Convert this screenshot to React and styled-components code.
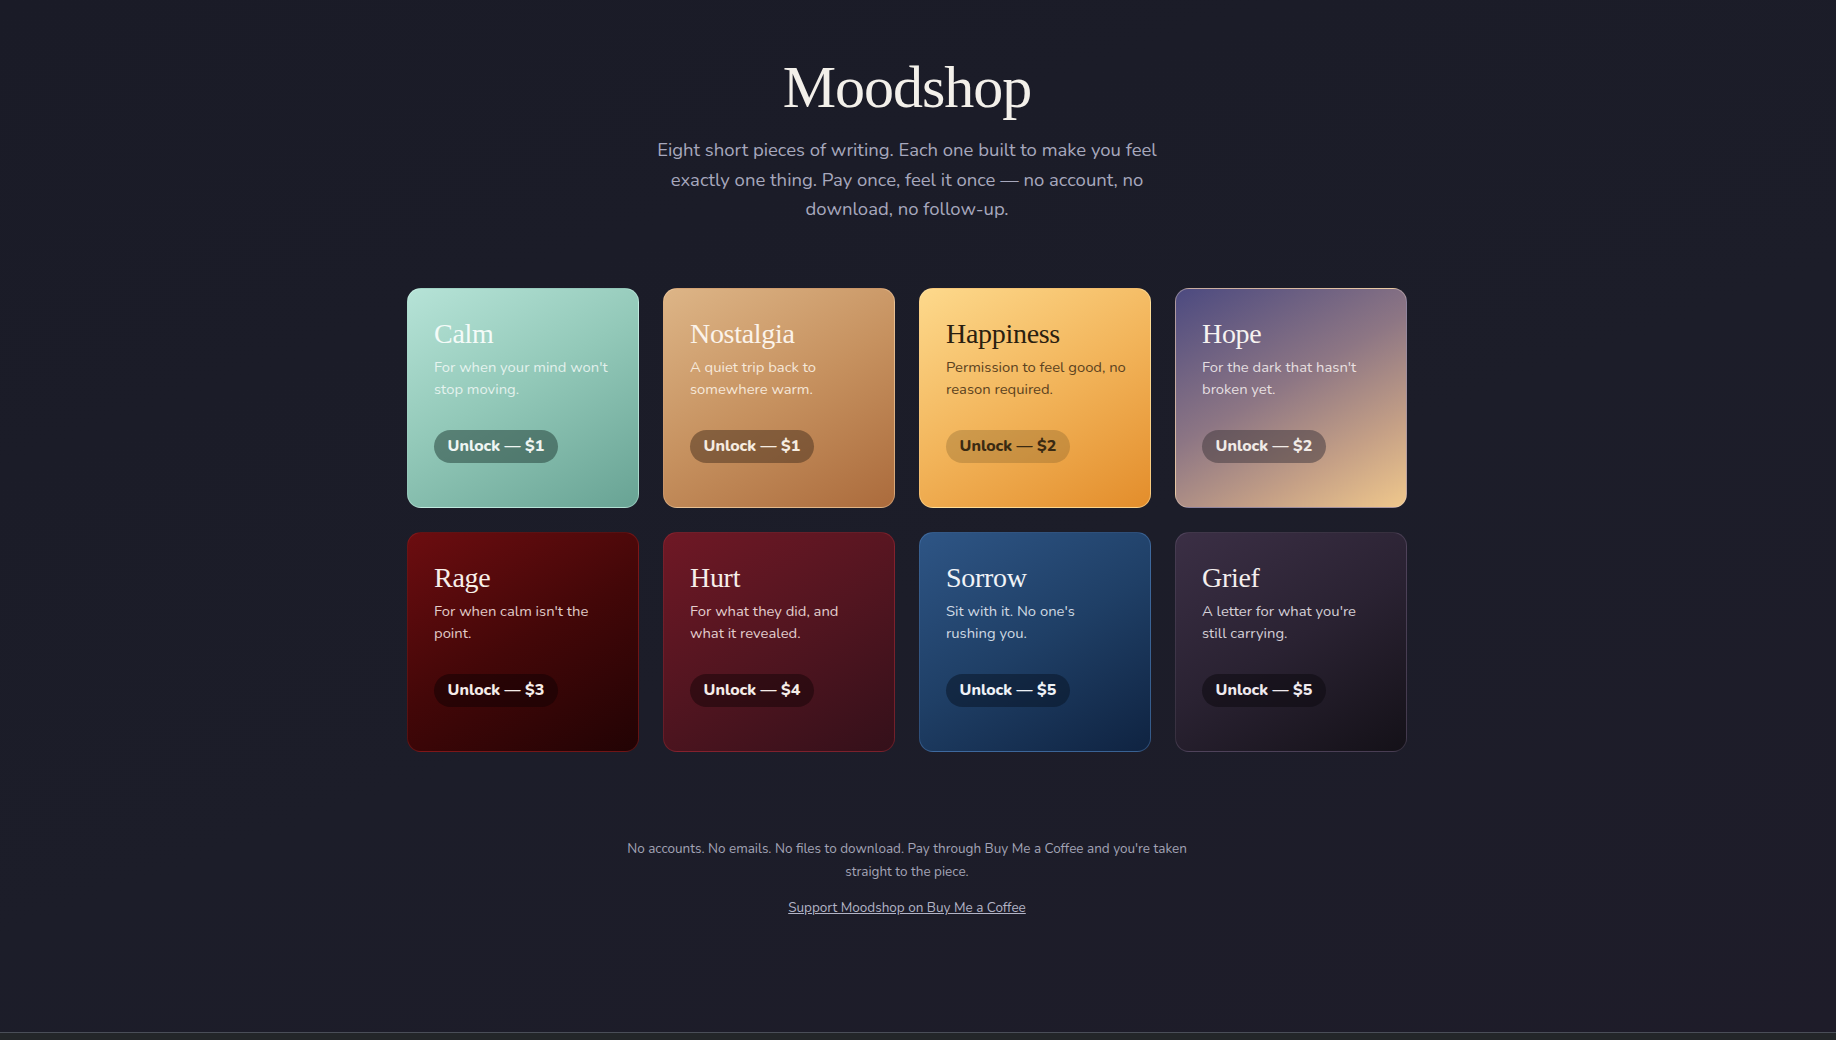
import React from "react";
import styled, { createGlobalStyle } from "styled-components";

const Global = createGlobalStyle`
  html, body { margin: 0; padding: 0; }
  body {
    background: #1b1c28;
    font-family: "Nunito", "Lato", "Open Sans", sans-serif;
    -webkit-font-smoothing: antialiased;
  }
`;

const Page = styled.div`
  min-height: 100vh;
  display: flex;
  flex-direction: column;
  background: linear-gradient(160deg, #1a1b27 0%, #1c1d29 55%, #1e1c29 100%);
`;

const Main = styled.main`
  flex: 1;
  display: flex;
  flex-direction: column;
  align-items: center;
  padding: 51px 22px 0 0;
`;

const Title = styled.h1`
  margin: 0;
  font-family: "Liberation Serif", "Times New Roman", serif;
  font-weight: 400;
  font-size: 60px;
  letter-spacing: -1px;
  line-height: 72px;
  color: #f3f0ea;
`;

const Lead = styled.p`
  margin: 13px 0 0;
  max-width: 520px;
  text-align: center;
  font-size: 18.5px;
  line-height: 29.5px;
  color: #a7a8bd;
`;

const Grid = styled.section`
  margin-top: 63px;
  width: 1000px;
  display: grid;
  grid-template-columns: repeat(4, 1fr);
  gap: 24px;
`;

const Card = styled.article`
  box-sizing: border-box;
  height: 220px;
  border-radius: 14px;
  padding: 28px 24px 0 26px;
  display: flex;
  flex-direction: column;
  align-items: flex-start;
  background: ${(p) => p.$bg};
  border: 1px solid ${(p) => p.$edge};
`;

const CardTitle = styled.h2`
  margin: 0;
  font-family: "Liberation Serif", "Times New Roman", serif;
  font-weight: 400;
  font-size: 28px;
  line-height: 33px;
  letter-spacing: -0.3px;
  color: ${(p) => p.$c};
`;

const CardText = styled.p`
  margin: 6px 0 0;
  font-size: 14.8px;
  line-height: 22px;
  color: ${(p) => p.$c};
`;

const Unlock = styled.button`
  margin-top: 30px;
  height: 33px;
  padding: 0 13.5px;
  border: none;
  border-radius: 999px;
  background: ${(p) => p.$bg};
  color: ${(p) => p.$c};
  font-family: inherit;
  font-weight: 800;
  font-size: 16px;
  cursor: pointer;
`;

const Footer = styled.footer`
  margin-top: 85px;
  display: flex;
  flex-direction: column;
  align-items: center;
  gap: 13px;
`;

const Note = styled.p`
  margin: 0;
  max-width: 580px;
  text-align: center;
  font-size: 13.5px;
  line-height: 23.4px;
  color: #a3a4b6;
`;

const Link = styled.a`
  font-size: 13.5px;
  line-height: 23px;
  color: #b3b4c6;
  text-decoration: underline;
`;

const Strip = styled.div`
  height: 7px;
  border-top: 1px solid #4a4e58;
  background: #232629;
`;

const moods = [
  {
    name: "Calm",
    text: "For when your mind won't stop moving.",
    price: 1,
    bg: "linear-gradient(150deg, #b6e3d7 0%, #93c9b9 45%, #68a394 100%)",
    edge: "rgba(220,255,245,0.35)",
    title: "#f4fbf8",
    desc: "rgba(255,255,255,0.75)",
    btn: "rgba(40,70,62,0.55)",
    btnText: "#eef5f2",
  },
  {
    name: "Nostalgia",
    text: "A quiet trip back to somewhere warm.",
    price: 1,
    bg: "linear-gradient(150deg, #ddb587 0%, #c6915f 50%, #ab6b3c 100%)",
    edge: "rgba(255,220,180,0.35)",
    title: "#fbf3ea",
    desc: "rgba(255,248,238,0.85)",
    btn: "rgba(80,55,35,0.55)",
    btnText: "#f6ece0",
  },
  {
    name: "Happiness",
    text: "Permission to feel good, no reason required.",
    price: 2,
    bg: "linear-gradient(150deg, #fdd98c 0%, #f2b45a 50%, #e38d2b 100%)",
    edge: "rgba(255,230,170,0.5)",
    title: "#2a2010",
    desc: "#5b4220",
    btn: "rgba(120,90,40,0.3)",
    btnText: "#3a2a12",
  },
  {
    name: "Hope",
    text: "For the dark that hasn't broken yet.",
    price: 2,
    bg: "linear-gradient(150deg, #4c4a80 0%, #8d7684 45%, #c5a086 75%, #f0c88c 100%)",
    edge: "rgba(230,210,200,0.4)",
    title: "#f6f2f0",
    desc: "rgba(255,250,248,0.82)",
    btn: "rgba(70,60,65,0.55)",
    btnText: "#f1ebe7",
  },
  {
    name: "Rage",
    text: "For when calm isn't the point.",
    price: 3,
    bg: "linear-gradient(150deg, #6c0d10 0%, #430708 50%, #220304 100%)",
    edge: "rgba(160,40,40,0.4)",
    title: "#f7efe9",
    desc: "rgba(255,240,236,0.85)",
    btn: "rgba(20,2,3,0.55)",
    btnText: "#f5ece8",
  },
  {
    name: "Hurt",
    text: "For what they did, and what it revealed.",
    price: 4,
    bg: "linear-gradient(150deg, #6f1825 0%, #521520 50%, #34101a 100%)",
    edge: "rgba(170,50,60,0.4)",
    title: "#f7efea",
    desc: "rgba(255,240,238,0.85)",
    btn: "rgba(25,6,10,0.55)",
    btnText: "#f5ece8",
  },
  {
    name: "Sorrow",
    text: "Sit with it. No one's rushing you.",
    price: 5,
    bg: "linear-gradient(150deg, #2e5585 0%, #1f3f66 50%, #0f2341 100%)",
    edge: "rgba(90,140,200,0.4)",
    title: "#f0f3f7",
    desc: "rgba(240,245,252,0.85)",
    btn: "rgba(10,22,40,0.55)",
    btnText: "#eef2f7",
  },
  {
    name: "Grief",
    text: "A letter for what you're still carrying.",
    price: 5,
    bg: "linear-gradient(150deg, #3b2f45 0%, #2a2232 50%, #141118 100%)",
    edge: "rgba(120,105,135,0.35)",
    title: "#f4efee",
    desc: "rgba(245,240,245,0.85)",
    btn: "rgba(15,12,18,0.6)",
    btnText: "#efeaee",
  },
];

export default function App() {
  return (
    <Page>
      <Global />
      <Main>
        <Title>Moodshop</Title>
        <Lead>
          Eight short pieces of writing. Each one built to make you feel exactly
          one thing. Pay once, feel it once — no account, no download, no
          follow-up.
        </Lead>
        <Grid>
          {moods.map((m) => (
            <Card key={m.name} $bg={m.bg} $edge={m.edge}>
              <CardTitle $c={m.title}>{m.name}</CardTitle>
              <CardText $c={m.desc}>{m.text}</CardText>
              <Unlock $bg={m.btn} $c={m.btnText}>
                Unlock — ${m.price}
              </Unlock>
            </Card>
          ))}
        </Grid>
        <Footer>
          <Note>
            No accounts. No emails. No files to download. Pay through Buy Me a
            Coffee and you're taken straight to the piece.
          </Note>
          <Link href="#">Support Moodshop on Buy Me a Coffee</Link>
        </Footer>
      </Main>
      <Strip />
    </Page>
  );
}
